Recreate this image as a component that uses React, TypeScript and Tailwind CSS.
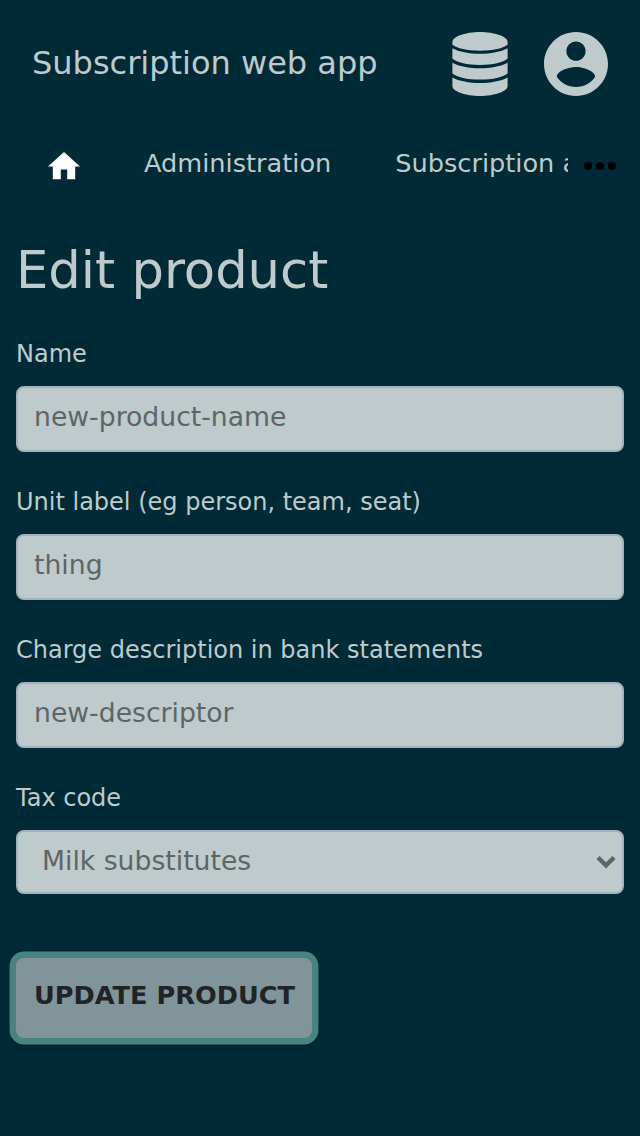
import React from 'react';

function DatabaseIcon() {
  return (
    <svg className="h-16 w-14" viewBox="0 0 56 64" fill="currentColor" aria-hidden="true">
      <path d="M28 0C42 0 55.6 4.4 55.6 10v2.6C51.500 16.500 41 18.700 28 18.700S4.500 16.500.4 12.600V10C.4 4.400 14 0 28 0z" />
      <path d="M.4 16.200C7 19.800 17 21.700 28 21.700s21-1.900 27.600-5.500v10.600C51 30.500 41 32.900 28 32.900S5 30.500.4 26.800z" />
      <path d="M.4 30.800C7 34.400 17 36.300 28 36.300s21-1.900 27.600-5.500v10.600C51 45.100 41 47.500 28 47.500S5 45.100.4 41.400z" />
      <path d="M.4 45.400C7 49 17 50.900 28 50.900s21-1.900 27.600-5.500V54C55.600 59.600 42 64 28 64S.4 59.600.4 54z" />
    </svg>
  );
}

function AccountIcon() {
  return (
    <svg className="size-16" viewBox="2 2 20 20" fill="currentColor" aria-hidden="true">
      <path d="M12 2C6.48 2 2 6.48 2 12s4.48 10 10 10 10-4.48 10-10S17.52 2 12 2zm0 3c1.66 0 3 1.34 3 3s-1.34 3-3 3-3-1.34-3-3 1.34-3 3-3zm0 14.2c-2.5 0-4.71-1.28-6-3.22.03-1.99 4-3.08 6-3.08 1.99 0 5.97 1.09 6 3.08-1.29 1.94-3.5 3.22-6 3.22z" />
    </svg>
  );
}

function Field({ label, value }: { label: string; value: string }) {
  return (
    <label className="mb-8 block h-[116px]">
      <span className="block h-[50px] text-[24px] leading-[36px]">{label}</span>
      <input
        type="text"
        defaultValue={value}
        className="block h-[66px] w-full rounded-lg border-2 border-[#a4b1bf] bg-[#bfcacc] px-4 pt-0 pb-1.5 text-[26.6667px] text-[#5e6566] outline-none"
      />
    </label>
  );
}

export default function App() {
  return (
    <div className="min-h-[1136px] overflow-hidden bg-[#002b36] font-['DejaVu_Sans',sans-serif] text-[#bfcacc]">
      <header className="flex h-32 items-center justify-between px-8">
        <span className="pb-0.5 text-[32px] leading-[48px]">Subscription web app</span>
        <div className="flex gap-9">
          <DatabaseIcon />
          <AccountIcon />
        </div>
      </header>

      <nav className="flex h-20 items-start">
        <div className="flex w-[568px] shrink-0 gap-16 overflow-hidden pl-12 text-[25.6px] leading-[38px] whitespace-nowrap">
          <a href="#" aria-label="Home" className="w-8 shrink-0 pt-6 text-white">
            <svg className="h-[28px] w-8" viewBox="2 3 20 17.5" fill="currentColor" aria-hidden="true">
              <path d="M10 20v-6h4v6h5v-8h3L12 3 2 12h3v8z" />
            </svg>
          </a>
          <a href="#" className="shrink-0 pt-4">Administration</a>
          <a href="#" className="shrink-0 pt-4">Subscription administration</a>
        </div>
        <button type="button" aria-label="More" className="ml-4 pt-[34px] text-black">
          <svg className="h-2 w-8" viewBox="0 0 32 8" fill="currentColor">
            <circle cx="4" cy="4" r="4" />
            <circle cx="16" cy="4" r="4" />
            <circle cx="28" cy="4" r="4" />
          </svg>
        </button>
      </nav>

      <main className="px-4 pt-6">
        <h1 className="h-[104px] text-[51.2px] leading-[76px]">Edit product</h1>
        <form>
          <Field label="Name" value="new-product-name" />
          <Field label="Unit label (eg person, team, seat)" value="thing" />
          <Field label="Charge description in bank statements" value="new-descriptor" />
          <label className="block">
            <span className="block h-[50px] text-[24px] leading-[36px]">Tax code</span>
            <span className="flex h-16 items-center justify-between rounded-lg border-2 border-[#a4b1bf] bg-[#bfcacc] pr-1.5 pl-6 text-[26.6667px] leading-[40px] text-[#5e6566]">
              <span className="pb-0.5">Milk substitutes</span>
              <svg className="mt-px h-[13px] w-5" viewBox="0 0 20 13" fill="currentColor" aria-hidden="true">
                <path d="M3.600 0 10 6.300 16.400 0l3.200 3.100L10 12.600.4 3.100z" />
              </svg>
            </span>
          </label>
          <button
            type="button"
            className="mt-16 block h-20 w-[296px] rounded-lg bg-[#81949a] pb-[6px] pl-px text-[25.6px] leading-[38px] font-bold whitespace-nowrap text-[#202427] shadow-[0_0_0_6.4px_#4a8482]"
          >
            UPDATE PRODUCT
          </button>
        </form>
      </main>
    </div>
  );
}
